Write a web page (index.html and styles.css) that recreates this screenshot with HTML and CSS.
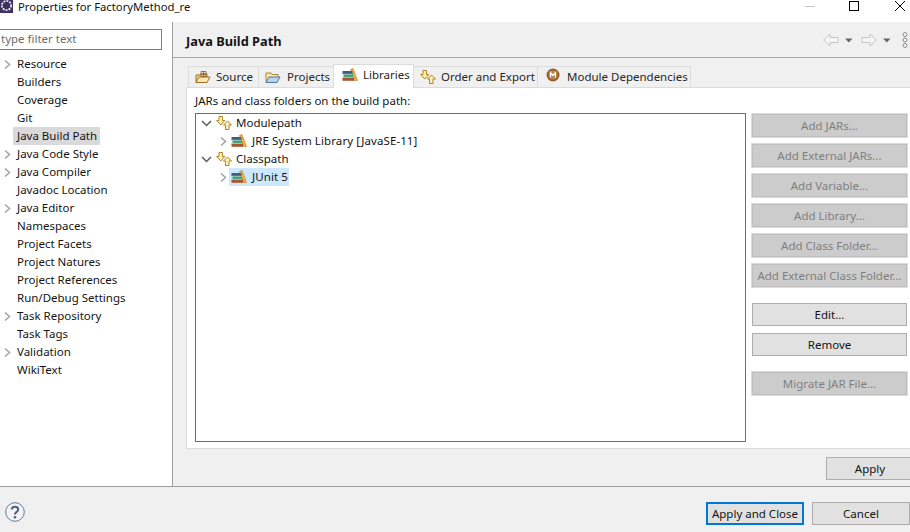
FILE: index.html
```html
<!DOCTYPE html>
<html lang="en">
<head>
<meta charset="utf-8">
<title>Properties for FactoryMethod_re</title>
<link rel="stylesheet" href="styles.css">
</head>
<body>
<svg class="defs" width="0" height="0" aria-hidden="true">
  <defs>
    <symbol id="lib" viewBox="0 0 16 16">
      <path d="M8.500 2.500 11 1.500l4.500 12h-3z" fill="#eeb04a" stroke="#c48727" stroke-width=".7"/>
      <rect x=".5" y="4" width="10" height="3.200" fill="#3f5f80"/>
      <rect x="1.500" y="7.200" width="9.500" height="3.200" fill="#3aa277"/>
      <rect x=".5" y="10.400" width="11.500" height="3.400" fill="#a8552e"/>
      <path d="M1 7.200h9.500M1 10.400h10" stroke="#e8e8e8" stroke-width=".5"/>
    </symbol>
    <symbol id="updown" viewBox="0 0 16 16">
      <path d="M3 1.500h3.500v4h2.300L4.800 10 .7 5.500H3z" fill="#fdf0bb" stroke="#b08420"/>
      <path d="M9.500 14.500H13v-4.500h2.500l-4-4-4 4h2z" fill="#fdf0bb" stroke="#b08420"/>
    </symbol>
    <symbol id="chev-r" viewBox="0 0 9 11"><path d="M2 1.500 6.500 5.500 2 9.500" fill="none" stroke="#a3a3a3" stroke-width="1.500"/></symbol>
    <symbol id="chev-d" viewBox="0 0 11 9"><path d="M1 2l4.500 4.500L10 2" fill="none" stroke="#5c5c5c" stroke-width="1.500"/></symbol>
  </defs>
</svg>
<div class="dialog">
  <header class="titlebar">
    <svg class="app-icon" width="14" height="14" viewBox="0 0 14 14"><rect width="13" height="13" fill="#3b3263"/><circle cx="6.500" cy="5.500" r="4.600" fill="none" stroke="#e6e6e6" stroke-width="1.800" stroke-dasharray="2 1"/><circle cx="6.500" cy="5.500" r="3" fill="#3b3263"/></svg>
    <span class="title">Properties for FactoryMethod_re</span>
    <div class="winctl">
      <svg width="12" height="12" viewBox="0 0 12 12"><path d="M1 6.500h10" stroke="#c8c8c8"/></svg>
      <svg width="12" height="12" viewBox="0 0 12 12"><rect x=".5" y="1.500" width="9" height="9" fill="none" stroke="#000"/></svg>
      <svg width="12" height="12" viewBox="0 0 12 12"><path d="M1 1l10 10M11 1 1 11" stroke="#000"/></svg>
    </div>
  </header>
  <div class="main">
    <aside class="sidebar">
      <input class="filter" type="text" placeholder="type filter text">
      <ul class="nav">
        <li class="nav-item"><svg class="nav-chev"><use href="#chev-r"/></svg>Resource</li>
        <li class="nav-item">Builders</li>
        <li class="nav-item">Coverage</li>
        <li class="nav-item">Git</li>
        <li class="nav-item"><span class="nav-sel">Java Build Path</span></li>
        <li class="nav-item"><svg class="nav-chev"><use href="#chev-r"/></svg>Java Code Style</li>
        <li class="nav-item"><svg class="nav-chev"><use href="#chev-r"/></svg>Java Compiler</li>
        <li class="nav-item">Javadoc Location</li>
        <li class="nav-item"><svg class="nav-chev"><use href="#chev-r"/></svg>Java Editor</li>
        <li class="nav-item">Namespaces</li>
        <li class="nav-item">Project Facets</li>
        <li class="nav-item">Project Natures</li>
        <li class="nav-item">Project References</li>
        <li class="nav-item">Run/Debug Settings</li>
        <li class="nav-item"><svg class="nav-chev"><use href="#chev-r"/></svg>Task Repository</li>
        <li class="nav-item">Task Tags</li>
        <li class="nav-item"><svg class="nav-chev"><use href="#chev-r"/></svg>Validation</li>
        <li class="nav-item">WikiText</li>
      </ul>
    </aside>
    <section class="content">
      <div class="page-head">
        <h1 class="page-title">Java Build Path</h1>
        <div class="page-tools">
          <svg width="16" height="14" viewBox="0 0 16 14"><path d="M.7 7 7 1v3.500h8v5H7V13z" fill="#f4f4f4" stroke="#c6c6c6"/></svg>
          <svg class="drop" width="8" height="5" viewBox="0 0 8 5"><path d="M0 .5h7.500L3.750 4.500z" fill="#666"/></svg>
          <svg class="fwd" width="16" height="14" viewBox="0 0 16 14"><path d="M15.300 7 9 1v3.500H1v5h8V13z" fill="#f4f4f4" stroke="#c6c6c6"/></svg>
          <svg class="drop" width="8" height="5" viewBox="0 0 8 5"><path d="M0 .5h7.500L3.750 4.500z" fill="#666"/></svg>
          <svg class="more" width="6" height="16" viewBox="0 0 6 16"><g fill="#f4f4f4" stroke="#8a8a8a"><circle cx="3" cy="2.500" r="2"/><circle cx="3" cy="8" r="2"/><circle cx="3" cy="13.500" r="2"/></g></svg>
        </div>
      </div>
      <div class="tabs">
        <div class="tab tab-source">
          <svg class="tab-ic" width="16" height="14" viewBox="0 0 16 14"><path d="M1 12V5h4l1-1h6v3" fill="#f4d58a" stroke="#9c6f2a"/><path d="M1 12.500 4 7h11l-3 5.500z" fill="#fbe6ad" stroke="#9c6f2a"/><path d="M6 1.500h5v5H6zM8.500 1.500v5M6 4h5" fill="none" stroke="#7a5a2a" stroke-width=".8"/></svg>
          Source</div>
        <div class="tab tab-projects">
          <svg class="tab-ic" width="16" height="14" viewBox="0 0 16 14"><path d="M1 12V3h5l1 1.500h6V7" fill="#fbe6ad" stroke="#a9843a"/><path d="M1 12.500 4 7h11l-3 5.500z" fill="#b9d3ee" stroke="#4e79a7"/></svg>
          Projects</div>
        <div class="tab tab-active">
          <svg class="tab-ic" width="16" height="16"><use href="#lib"/></svg>
          Libraries</div>
        <div class="tab tab-order">
          <svg class="tab-ic" width="16" height="16"><use href="#updown"/></svg>
          Order and Export</div>
        <div class="tab tab-module">
          <svg class="tab-ic" width="14" height="14" viewBox="0 0 14 14"><circle cx="7" cy="7" r="6.500" fill="#96602a"/><circle cx="7" cy="7" r="4.500" fill="#b98345"/><path d="M4.500 9.500v-5l2.500 3 2.500-3v5" fill="none" stroke="#fff" stroke-width="1.200"/></svg>
          Module Dependencies</div>
      </div>
      <div class="tab-body">
        <div class="tab-label">JARs and class folders on the build path:</div>
        <div class="panes">
          <div class="tree">
            <div class="row"><svg class="tw-d"><use href="#chev-d"/></svg><svg class="ic"><use href="#updown"/></svg><span class="lbl">Modulepath</span></div>
            <div class="row row-child"><svg class="tw-r"><use href="#chev-r"/></svg><svg class="ic"><use href="#lib"/></svg><span class="lbl">JRE System Library [JavaSE-11]</span></div>
            <div class="row"><svg class="tw-d"><use href="#chev-d"/></svg><svg class="ic"><use href="#updown"/></svg><span class="lbl">Classpath</span></div>
            <div class="row row-child"><svg class="tw-r"><use href="#chev-r"/></svg><span class="sel"><svg class="ic"><use href="#lib"/></svg><span class="lbl">JUnit 5</span></span></div>
          </div>
          <div class="actions">
            <button class="btn" disabled>Add JARs...</button>
            <button class="btn" disabled>Add External JARs...</button>
            <button class="btn" disabled>Add Variable...</button>
            <button class="btn" disabled>Add Library...</button>
            <button class="btn" disabled>Add Class Folder...</button>
            <button class="btn" disabled>Add External Class Folder...</button>
            <button class="btn btn-gap">Edit...</button>
            <button class="btn">Remove</button>
            <button class="btn btn-gap" disabled>Migrate JAR File...</button>
          </div>
        </div>
      </div>
      <div class="apply-row"><button class="btn btn-apply">Apply</button></div>
    </section>
  </div>
  <footer class="footer">
    <svg class="help" width="20" height="20" viewBox="0 0 20 20"><circle cx="10" cy="10" r="9.300" fill="#f4f4f4" stroke="#5f7aa0"/><path d="M6.800 7.500C6.800 3.800 13.200 3.800 13.200 7.500 13.200 10 10 9.800 10 12.500" fill="none" stroke="#4a628a" stroke-width="2"/><circle cx="10" cy="15.300" r="1.300" fill="#4a628a"/></svg>
    <div class="footer-btns">
      <button class="btn btn-foot btn-default">Apply and Close</button>
      <button class="btn btn-foot">Cancel</button>
    </div>
  </footer>
</div>
</body>
</html>
```
FILE: styles.css
```css
* { box-sizing: border-box; }
html, body { margin: 0; padding: 0; }
body {
  width: 910px;
  height: 532px;
  overflow: hidden;
  background: #f0f0f0;
  color: #141414;
  font: 11.5px/18px "Noto Sans", "Open Sans", sans-serif;
}
.defs { position: absolute; }
.dialog { display: flex; flex-direction: column; height: 532px; }

.titlebar {
  flex: 0 0 22px;
  display: flex;
  align-items: flex-start;
  background: #fff;
}
.app-icon { flex: none; }
.title { margin-left: 4px; font-size: 11.3px; line-height: 14px; white-space: nowrap; }
.winctl { margin-left: auto; display: flex; gap: 33px; margin-right: 4px; }

.main { flex: 1; display: flex; min-height: 0; }

.sidebar {
  flex: 0 0 173px;
  background: #fff;
  border-right: 1px solid #a0a0a0;
  padding-top: 7px;
}
.filter {
  display: block;
  width: 163px;
  height: 21px;
  margin-left: -1px;
  padding: 0 0 2px 1px;
  border: 1px solid #7a7a7a;
  background: #fff;
  font: inherit;
  color: #141414;
  outline: none;
}
.filter::placeholder { color: #6d6d6d; opacity: 1; }
.nav { list-style: none; margin: 5px 0 0; padding: 0; }
.nav-item {
  height: 18px;
  padding-left: 17px;
  position: relative;
  white-space: nowrap;
}
.nav-chev { position: absolute; left: 3px; top: 4px; width: 9px; height: 11px; }
.nav-sel { display: inline-block; background: #d9d9d9; margin-left: -4px; padding: 0 3px 0 4px; }

.content { flex: 1; min-width: 0; display: flex; flex-direction: column; }
.page-head {
  flex: 0 0 36px;
  display: flex;
  align-items: center;
  padding: 2px 0 0 13px;
  border-bottom: 1px solid #a8a8a8;
}
.page-title { margin: 0; font-size: 12.8px; font-weight: 700; line-height: 18px; }
.page-tools { margin-left: auto; display: flex; align-items: center; gap: 6px; margin-right: 2px; margin-top: -1px; }
.page-tools .fwd { margin-left: 2px; }
.page-tools .more { margin-left: 5px; }

.tabs {
  display: flex;
  align-items: flex-end;
  margin: 8px 0 0 15px;
  height: 21px;
}
.tab {
  height: 21px;
  display: flex;
  align-items: center;
  background: #f0f0f0;
  border: 1px solid #dcdcdc;
  border-left-width: 0;
  border-bottom: 0;
  white-space: nowrap;
  color: #262626;
}
.tab-source { border-left-width: 1px; width: 71px; padding-left: 6px; }
.tab-projects { width: 75px; padding-left: 6px; }
.tab-active {
  width: 81px;
  height: 24px;
  padding: 0 0 4px 8px;
  background: #fff;
  position: relative;
  z-index: 1;
  margin-bottom: -1px;
  margin-left: -1px;
  border-left-width: 1px;
}
.tab-order { width: 124px; padding-left: 6px; }
.tab-module { width: 153px; padding-left: 8px; }
.tab-ic { margin-right: 5px; flex: none; }
.tab-projects .tab-ic { margin-right: 6px; }
.tab-module .tab-ic { margin-right: 7px; margin-top: -4px; }

.tab-body {
  flex: 1;
  background: #fff;
  border: 1px solid #dcdcdc;
  border-right: 0;
  padding: 4px 0 0 8px;
  margin-left: 13px;
  min-height: 0;
}
.tab-label { height: 18px; line-height: 17px; }
.panes { display: flex; margin-top: 3px; }
.tree {
  width: 551px;
  height: 329px;
  border: 1px solid #6e6e6e;
}
.row { height: 18px; display: flex; align-items: center; padding-left: 5px; white-space: nowrap; }
.tw-d { width: 11px; height: 9px; flex: none; }
.tw-r { width: 9px; height: 11px; flex: none; }
.ic { width: 16px; height: 16px; flex: none; margin-left: 4px; }
.lbl { margin-left: 4px; }
.row-child { padding-left: 23px; }
.row-child .ic { margin-left: 3px; }
.row-child .lbl { margin-left: 5px; letter-spacing: .1px; }
.sel { display: inline-flex; align-items: center; background: #cce8ff; height: 18px; padding-right: 1px; margin-left: 1px; }
.row-child .sel .ic { margin-left: 2px; }

.actions { flex: 1; display: flex; flex-direction: column; margin-left: 6px; padding-top: 1px; gap: 7px; }
.btn {
  height: 23px;
  width: 155px;
  flex: none;
  padding: 0;
  border: 1px solid #adadad;
  background: #e1e1e1;
  font: inherit;
  color: #141414;
}
.btn:disabled { background: #cccccc; border-color: #bfbfbf; color: #7f7f7f; outline: 1px solid #dcdcdc; }
.btn-gap { margin-top: 9px; }
.apply-row { flex: 0 0 37px; display: flex; align-items: flex-start; padding: 8px 0 0 653px; }
.btn-apply { width: 88px; }

.footer {
  flex: 0 0 46px;
  border-top: 1px solid #a0a0a0;
  display: flex;
  align-items: flex-start;
  padding-left: 5px;
}
.help { margin-top: 15px; }
.footer-btns { margin-left: auto; display: flex; gap: 8px; margin-top: 15px; }
.btn-foot { width: 98px; }
.btn-default { border: 2px solid #0078d7; }
```
